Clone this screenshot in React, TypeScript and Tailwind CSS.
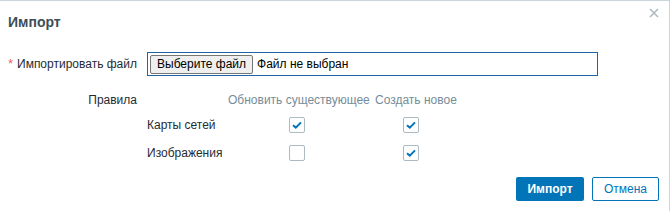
import React from "react";

function Check({ checked }: { checked: boolean }) {
  return (
    <span className="inline-flex h-[16px] w-[16px] items-center justify-center rounded-[2px] border border-[#acbbc2] bg-white">
      {checked && (
        <svg width="10" height="8" viewBox="0 0 10 8">
          <path d="M1 4.2 L3.8 6.6 L9 1.4" fill="none" stroke="#0275b8" strokeWidth="2" />
        </svg>
      )}
    </span>
  );
}

export default function App() {
  return (
    <div
      className="relative h-[211px] w-[670px] overflow-hidden border-t border-r border-[#ccd5d9] bg-white text-[12px] text-[#1f2c33]"
      style={{ fontFamily: '"Liberation Sans", Arial, sans-serif' }}
    >
      <div className="flex items-start justify-between pl-[8px] pr-[10px] pt-[13px]">
        <h1 className="text-[14px] font-bold leading-[16px] text-[#3d4d57]">Импорт</h1>
        <button className="mt-[-6px] text-[#acbbc2]">
          <svg width="10" height="10" viewBox="0 0 10 10">
            <path d="M1 1 L9 9 M9 1 L1 9" stroke="#acbbc2" strokeWidth="1.6" />
          </svg>
        </button>
      </div>

      <div className="mt-[22px] grid grid-cols-[137px_1fr] gap-x-[10px]">
        <div className="flex h-[24px] items-center justify-end">
          <span className="mr-[4px] text-[#e45959]">*</span>
          <span>Импортировать файл</span>
        </div>
        <div className="mr-[71px] flex h-[24px] items-center border border-[#1f65a6] pl-[2px]">
          <button className="h-[19px] rounded-[2px] border border-[#767676] bg-[#efefef] px-[6px] text-[12px] leading-[17px] text-black">
            Выберите файл
          </button>
          <span className="ml-[4px] text-black">Файл не выбран</span>
        </div>

        <div className="mt-[16px] flex h-[16px] items-center justify-end">Правила</div>
        <div className="mt-[16px]">
          <div className="grid grid-cols-[81px_147px_88px]">
            <div className="h-[16px]" />
            <div className="h-[16px] leading-[16px] text-[#768d99]">Обновить существующее</div>
            <div className="h-[16px] pl-[0px] leading-[16px] text-[#768d99]">Создать новое</div>

            <div className="flex h-[31px] items-center pt-[2px]">Карты сетей</div>
            <div className="flex h-[31px] items-center pl-[61px] pt-[2px]">
              <Check checked />
            </div>
            <div className="flex h-[31px] items-center pl-[28px] pt-[2px]">
              <Check checked />
            </div>

            <div className="flex h-[27px] items-center">Изображения</div>
            <div className="flex h-[27px] items-center pl-[61px]">
              <Check checked={false} />
            </div>
            <div className="flex h-[27px] items-center pl-[28px]">
              <Check checked />
            </div>
          </div>
        </div>
      </div>

      <div className="mt-[11px] flex justify-end gap-[8px] pr-[10px]">
        <button className="h-[24px] w-[68px] rounded-[2px] bg-[#0275b8] text-[12px] font-bold text-white">
          Импорт
        </button>
        <button className="h-[24px] w-[67px] rounded-[2px] border border-[#0275b8] bg-white text-[12px] text-[#0275b8]">
          Отмена
        </button>
      </div>
    </div>
  );
}
